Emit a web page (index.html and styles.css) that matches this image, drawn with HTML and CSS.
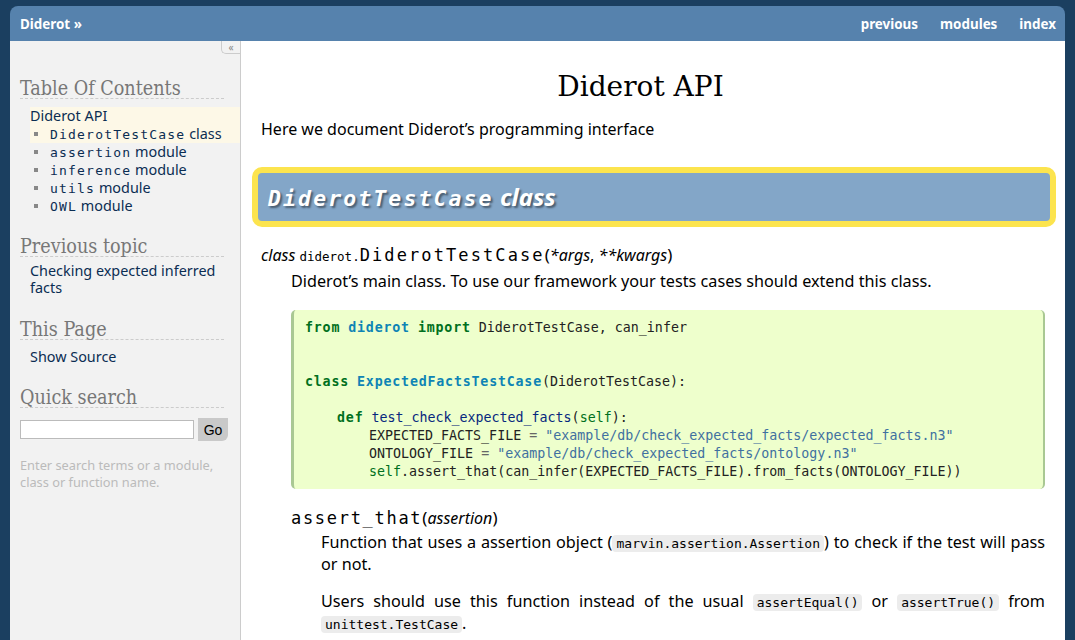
FILE: index.html
```html
<!DOCTYPE html>
<html lang="en">
<head>
<meta charset="utf-8">
<title>Diderot API</title>
<link rel="stylesheet" href="styles.css">
</head>
<body>
<div class="page">
  <header class="header">
    <a class="brand" href="#">Diderot »</a>
    <nav class="nav">
      <a href="#">previous</a>
      <a href="#">modules</a>
      <a href="#">index</a>
    </nav>
  </header>
  <div class="document">
    <aside class="sidebar">
      <div class="collapse">«</div>
      <h3 class="side-h">Table Of Contents</h3>
      <div class="toc">
        <div class="toc-current">
          <a href="#">Diderot API</a>
          <ul class="toc-sub">
            <li><a href="#"><code class="tt">DiderotTestCase</code> class</a></li>
          </ul>
        </div>
        <ul class="toc-sub">
          <li><a href="#"><code class="tt">assertion</code> module</a></li>
          <li><a href="#"><code class="tt">inference</code> module</a></li>
          <li><a href="#"><code class="tt">utils</code> module</a></li>
          <li><a href="#"><code class="tt">OWL</code> module</a></li>
        </ul>
      </div>
      <h3 class="side-h side-prev">Previous topic</h3>
      <p class="side-p side-p-prev"><a href="#">Checking expected inferred facts</a></p>
      <h3 class="side-h side-page">This Page</h3>
      <p class="side-p side-p-page"><a href="#">Show Source</a></p>
      <h3 class="side-h side-search">Quick search</h3>
      <form class="search">
        <input class="search-input" type="text">
        <button class="search-go" type="button">Go</button>
      </form>
      <p class="search-help">Enter search terms or a module, class or function name.</p>
    </aside>
    <main class="body">
      <h1 class="title">Diderot API</h1>
      <p class="intro">Here we document Diderot’s programming interface</p>
      <h2 class="section"><code class="h2-tt">DiderotTestCase</code> class</h2>
      <dl class="desc">
        <dt class="sig"><em class="property">class </em><code class="descclassname">diderot.</code><code class="descname descname-cls">DiderotTestCase</code><span class="paren">(</span><em>*args</em>, <em>**kwargs</em><span class="paren">)</span></dt>
        <dd class="desc-body">
          <p class="para">Diderot’s main class. To use our framework your tests cases should extend this class.</p>
<pre class="highlight"><span class="k">from</span> <span class="nn">diderot</span> <span class="k">import</span> DiderotTestCase, can_infer


<span class="k">class</span> <span class="nc">ExpectedFactsTestCase</span>(DiderotTestCase):

    <span class="k">def</span> <span class="nf">test_check_expected_facts</span>(<span class="bp">self</span>):
        EXPECTED_FACTS_FILE <span class="o">=</span> <span class="s">"example/db/check_expected_facts/expected_facts.n3"</span>
        ONTOLOGY_FILE <span class="o">=</span> <span class="s">"example/db/check_expected_facts/ontology.n3"</span>
        <span class="bp">self</span>.assert_that(can_infer(EXPECTED_FACTS_FILE).from_facts(ONTOLOGY_FILE))</pre>
          <dl class="desc method">
            <dt class="sig"><code class="descname">assert_that</code><span class="paren">(</span><em>assertion</em><span class="paren">)</span></dt>
            <dd class="desc-body">
              <p class="para">Function that uses a assertion object (<code class="literal">marvin.assertion.Assertion</code>) to check if the test will pass or not.</p>
              <p class="para">Users should use this function instead of the usual <code class="literal">assertEqual()</code> or <code class="literal">assertTrue()</code> from <code class="literal">unittest.TestCase</code>.</p>
            </dd>
          </dl>
        </dd>
      </dl>
    </main>
  </div>
</div>
</body>
</html>
```

FILE: styles.css
```css
* { box-sizing: border-box; }
html, body { margin: 0; padding: 0; }
body {
  background: #1b3f60;
  font-family: "Noto Sans", "Open Sans", sans-serif;
  color: #000;
}
.page { padding: 6px 10px 0; }

/* header */
.header {
  display: flex;
  justify-content: space-between;
  align-items: center;
  height: 35px;
  background: #5682ad;
  border-radius: 8px 8px 0 0;
  padding: 0 9px 0 10px;
  font-size: 13.4px;
  font-weight: bold;
}
.header a { color: #fff; text-decoration: none; }
.nav { display: flex; gap: 22px; }

/* layout */
.document { display: flex; background: #fff; min-height: 620px; }

/* sidebar */
.sidebar {
  position: relative;
  flex: none;
  width: 231px;
  background: #f2f2f2;
  border-right: 1px solid #ccc;
  padding: 39px 16px 0 10px;
  font-size: 14.4px;
}
.sidebar a { color: #0b2d52; text-decoration: none; }
.collapse {
  position: absolute;
  top: 0;
  right: 0;
  width: 19px;
  height: 13px;
  border-left: 1px solid #ccc;
  border-bottom: 1px solid #ccc;
  border-bottom-left-radius: 5px;
  color: #888;
  font-size: 10px;
  line-height: 12px;
  text-align: center;
}
.side-h {
  margin: 0;
  font-family: "DejaVu Serif", serif;
  font-stretch: condensed;
  font-weight: normal;
  font-size: 19.6px;
  line-height: 18px;
  color: #777;
  border-bottom: 1px dashed #ccc;
}
.toc { margin-top: 8px; line-height: 18px; }
.toc-current {
  background: #fdf8e7;
  margin-left: 10px;
  margin-right: -16px;
}
.toc-sub { list-style: none; margin: 0; padding: 0; }
.toc > .toc-sub { margin-left: 10px; }
.toc-sub li { position: relative; height: 18px; padding-left: 20px; white-space: nowrap; }
.toc-sub li::before {
  content: "";
  position: absolute;
  left: 4px;
  top: 7px;
  width: 4px;
  height: 4px;
  background: #888;
}
.tt {
  font-family: "DejaVu Sans Mono", monospace;
  font-size: 13px;
  line-height: 1;
  letter-spacing: 1.2px;
}
.side-prev { margin-top: 23px; }
.side-p { margin: 0 0 0 10px; line-height: 17px; }
.side-p-prev { margin-top: 5px; }
.side-page { margin-top: 25px; }
.side-p-page { margin-top: 8px; }
.side-search { margin-top: 24px; }
.search { display: flex; align-items: center; gap: 4px; margin: 10px 0 0; }
.search-input {
  flex: none;
  width: 174px;
  height: 19px;
  border: 1px solid #bbb;
  background: #fff;
  padding: 0 2px;
}
.search-go {
  flex: none;
  width: 30px;
  height: 23px;
  border: none;
  background: #c9c9c9;
  border-radius: 0 0 6px 0;
  font-family: "Liberation Sans", sans-serif;
  font-size: 14px;
  color: #000;
  padding: 0;
}
.search-help {
  margin: 16px 0 0;
  font-size: 12.8px;
  line-height: 17px;
  color: #bbb;
}

/* main body */
.body { flex: 1; min-width: 0; padding: 0 20px; }
.title {
  margin: 29px 0 0;
  padding-right: 25px;
  font-family: "DejaVu Serif", serif;
  font-weight: normal;
  font-size: 28px;
  line-height: 34px;
  text-align: center;
}
.intro { margin: 15px 0 0; font-size: 16px; line-height: 21px; }
.section {
  margin: 27px -11px 0 -9px;
  height: 60px;
  border: 6px solid #fce44e;
  border-radius: 10px;
  background: #83a6c8;
  color: #fff;
  padding-left: 10px;
  font-size: 24px;
  font-style: italic;
  font-weight: bold;
  line-height: 48px;
  text-shadow: 2px 2px 2px rgba(0, 0, 0, 0.45);
}
.h2-tt {
  font-family: "DejaVu Sans Mono", monospace;
  font-size: 21.5px;
  letter-spacing: 2.1px;
}
.desc { margin: 17px 0 0; }
.sig {
  font-size: 16px;
  line-height: 22px;
}
.property { font-style: italic; }
.descclassname {
  font-family: "DejaVu Sans Mono", monospace;
  font-size: 12.5px;
}
.descname {
  font-family: "DejaVu Sans Mono", monospace;
  font-size: 17px;
  letter-spacing: 1.7px;
}
.descname-cls { letter-spacing: 2.1px; }
.paren { font-size: 17px; }
.desc-body { margin: 0 0 0 30px; }
.para {
  margin: 3px 0 0;
  font-size: 16.2px;
  line-height: 21px;
  text-align: justify;
}
.para + .para { margin-top: 16px; }
.highlight {
  margin: 18px 0 0;
  padding: 8.5px 10px 8.5px 11px;
  background: #eeffcc;
  border-left: 3px solid #a9c893;
  border-right: 2px solid #a9c893;
  border-radius: 5px;
  font-family: "DejaVu Sans Mono", monospace;
  font-size: 13.3px;
  line-height: 18px;
  color: #222;
}
.k { color: #007020; font-weight: bold; letter-spacing: 0.8px; }
.nn { color: #0e84b5; font-weight: bold; letter-spacing: 0.8px; }
.nc { color: #0e84b5; font-weight: bold; letter-spacing: 0.8px; }
.nf { color: #06287e; }
.bp { color: #007020; }
.o { color: #666; }
.s { color: #4070a0; }
.method { margin-top: 18px; }
.literal {
  font-family: "DejaVu Sans Mono", monospace;
  font-size: 13px;
  background: #ececec;
  border-radius: 4px;
  padding: 1px 4px;
}
```
